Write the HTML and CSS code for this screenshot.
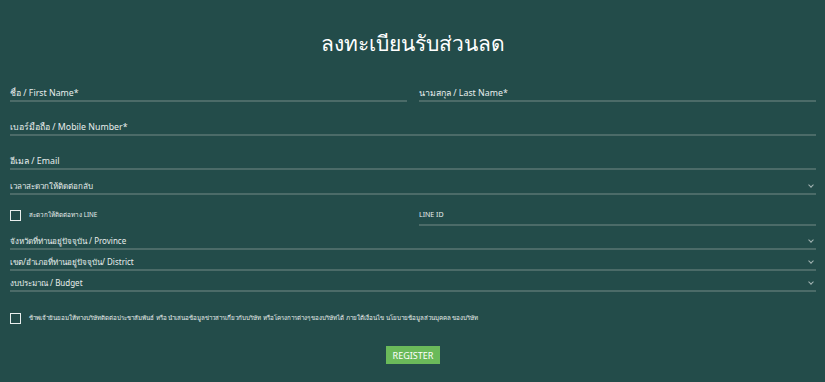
FILE: index.html
```html
<!DOCTYPE html>
<html lang="th">
<head>
  <meta charset="UTF-8" />
  <meta name="viewport" content="width=device-width, initial-scale=1.0" />
  <title>ลงทะเบียนรับส่วนลด</title>
  <link rel="stylesheet" href="styles.css">
</head>
<body>

  <header class="title">
    <h1>ลงทะเบียนรับส่วนลด</h1>
  </header>

  <!-- Register form -->
  <form class="reg-form">
    <div class="row two">
      <div class="field"><span>ชื่อ / First Name*</span></div>
      <div class="field"><span>นามสกุล / Last Name*</span></div>
    </div>
    <div class="field f-mobile"><span>เบอร์มือถือ / Mobile Number*</span></div>
    <div class="field f-email"><span>อีเมล / Email</span></div>
    <div class="field select f-time"><span>เวลาสะดวกให้ติดต่อกลับ</span><i class="chev"></i></div>

    <div class="row two f-line">
      <label class="check"><span class="box"></span><span class="txt">สะดวกให้ติดต่อทาง LINE</span></label>
      <div class="field line-id"><span>LINE ID</span></div>
    </div>

    <div class="field select f-prov"><span>จังหวัดที่ท่านอยู่ปัจจุบัน / Province</span><i class="chev"></i></div>
    <div class="field select f-dist"><span>เขต/อำเภอที่ท่านอยู่ปัจจุบัน/ District</span><i class="chev"></i></div>
    <div class="field select f-budget"><span>งบประมาณ / Budget</span><i class="chev"></i></div>

    <label class="check consent"><span class="box"></span><span class="txt">ข้าพเจ้ายินยอมให้ทางบริษัทติดต่อประชาสัมพันธ์ หรือ นำเสนอข้อมูลข่าวสารเกี่ยวกับบริษัท หรือโครงการต่างๆ ของบริษัทได้ ภายใต้เงื่อนไข นโยบายข้อมูลส่วนบุคคล ของบริษัท</span></label>

    <div class="actions">
      <button type="button" class="btn">REGISTER</button>
    </div>
  </form>

</body>
</html>
```

FILE: styles.css
```css
/* --- base --- */
* { margin: 0; padding: 0; box-sizing: border-box; }
body {
  background: #234c4a;
  color: #e8eeed;
  font-family: 'Noto Sans', 'DejaVu Sans', sans-serif;
  padding: 0 9px 0 10px;
}

.title {
  height: 84px;
  padding-top: 25px;
  text-align: center;
}
.title h1 {
  height: 36px;
  font-weight: 300;
  font-size: 21px;
  line-height: 36px;
  color: #fff;
}

/* --- form --- */
.reg-form {
  display: flex;
  flex-direction: column;
}
.row.two {
  display: grid;
  grid-template-columns: 1fr 1fr;
  gap: 12px;
}
.field {
  position: relative;
  padding-top: 2px;
  font-size: 8.8px;
  border-bottom: 2px solid #4b6b68;
}
.field span {
  display: block;
  height: 14px;
  line-height: 14px;
}
.select span { font-size: 8px; }

.chev {
  position: absolute;
  right: 3px;
  top: 6px;
  width: 4px;
  height: 4px;
  border-right: 1px solid #a3b5b3;
  border-bottom: 1px solid #a3b5b3;
  transform: rotate(45deg);
}

.f-mobile { margin-top: 16px; }
.f-email { margin-top: 16px; }
.f-time { margin-top: 7px; }
.f-line { margin-top: 11px; align-items: start; }
.line-id { padding-bottom: 2px; }
.line-id span { font-size: 7px; }
.f-prov { margin-top: 6px; }
.f-dist { margin-top: 3px; }
.f-budget { margin-top: 3px; }

.check {
  display: flex;
  align-items: center;
  gap: 8px;
  height: 14px;
  font-size: 6.3px;
  margin-top: 2px;
}
.check .txt {
  height: 14px;
  line-height: 14px;
  white-space: nowrap;
}
.check .box {
  flex: none;
  width: 11px;
  height: 11px;
  border: 1.5px solid #e8eeed;
}
.consent { margin-top: 19px; font-size: 6.2px; }

.actions {
  display: flex;
  justify-content: center;
  margin-top: 21px;
}
.btn {
  background: #6aba5a;
  color: #fff;
  border: none;
  width: 54px;
  height: 18px;
  font-family: inherit;
  font-size: 9px;
  cursor: pointer;
}
```
